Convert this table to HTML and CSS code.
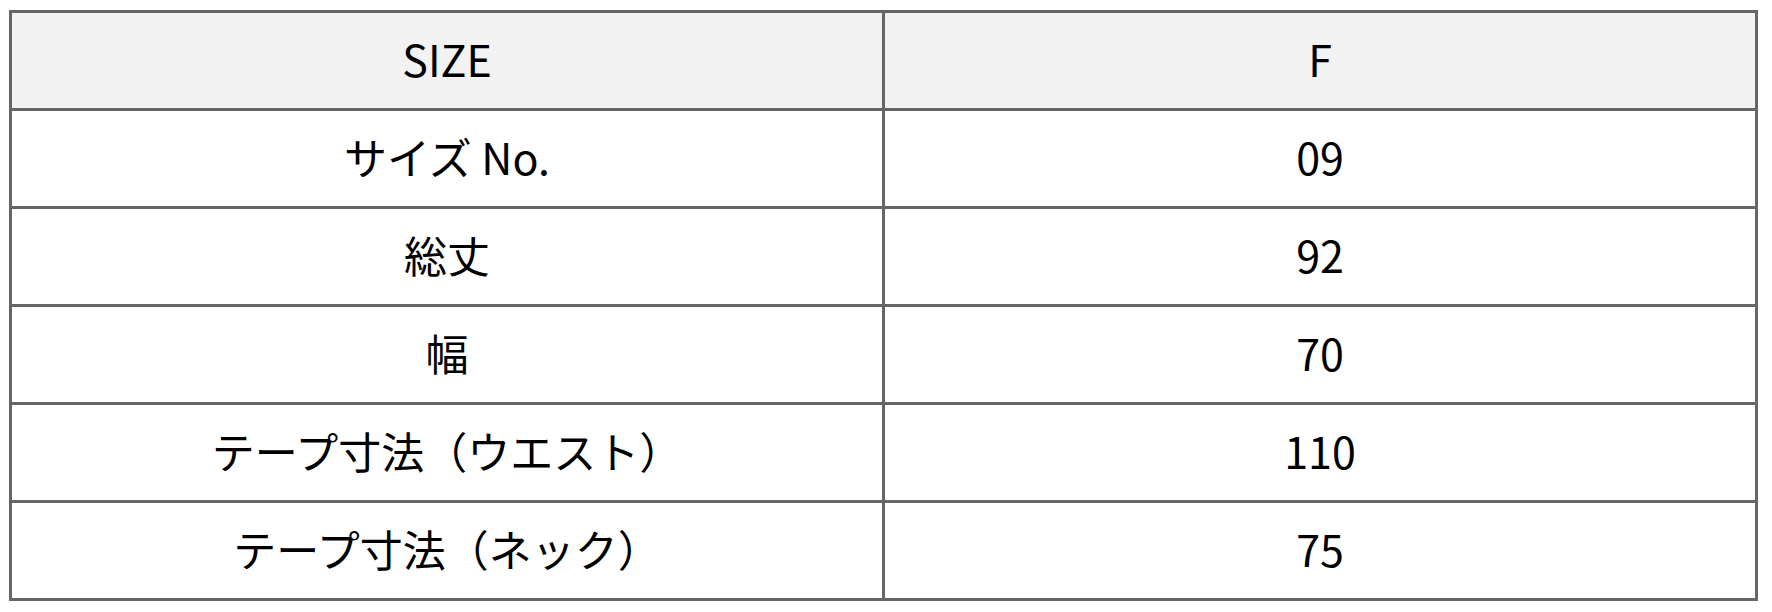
FILE: index.html
```html
<!DOCTYPE html>
<html lang="ja">
<head>
<meta charset="utf-8">
<title>サイズ表</title>
<link rel="stylesheet" href="styles.css">
</head>
<body>
<div class="wrap">
<table class="size-table">
  <thead>
    <tr><th>SIZE</th><th>F</th></tr>
  </thead>
  <tbody>
    <tr><td>サイズ No.</td><td>09</td></tr>
    <tr><td>総丈</td><td>92</td></tr>
    <tr><td>幅</td><td>70</td></tr>
    <tr><td>テープ寸法（ウエスト）</td><td>110</td></tr>
    <tr><td>テープ寸法（ネック）</td><td>75</td></tr>
  </tbody>
</table>
</div>
</body>
</html>
```

FILE: styles.css
```css
html, body {
  margin: 0;
  padding: 0;
  background: #ffffff;
}
.wrap {
  padding: 10px 0 0 9px;
}
.size-table {
  width: 1749px;
  table-layout: fixed;
  border-collapse: separate;
  border-spacing: 3px;
  background: #666666;
  font-family: "Noto Sans CJK JP", "Noto Sans", sans-serif;
  font-size: 43px;
  line-height: 1.3;
  color: #000000;
}
.size-table th,
.size-table td {
  height: 95px;
  padding: 0 0 3px;
  box-sizing: border-box;
  text-align: center;
  vertical-align: middle;
  font-weight: 400;
  background: #ffffff;
}
.size-table th {
  background: #f2f2f2;
}
```
